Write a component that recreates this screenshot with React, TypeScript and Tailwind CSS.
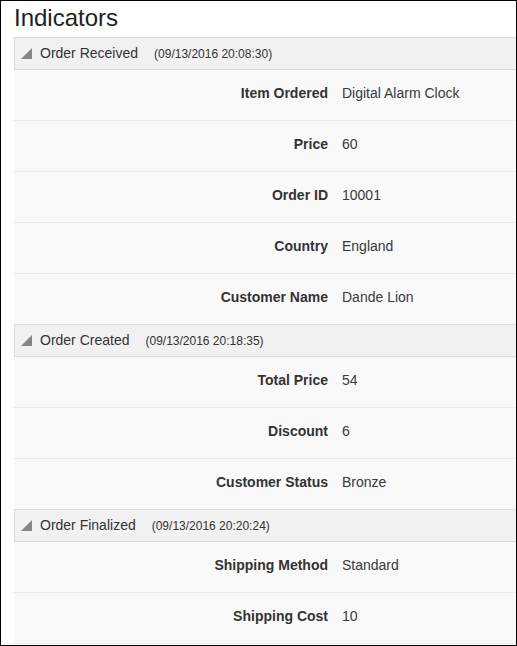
type Row = { label: string; value: string }
type Section = { title: string; time: string; rows: Row[] }

const sections: Section[] = [
  {
    title: 'Order Received',
    time: '(09/13/2016 20:08:30)',
    rows: [
      { label: 'Item Ordered', value: 'Digital Alarm Clock' },
      { label: 'Price', value: '60' },
      { label: 'Order ID', value: '10001' },
      { label: 'Country', value: 'England' },
      { label: 'Customer Name', value: 'Dande Lion' },
    ],
  },
  {
    title: 'Order Created',
    time: '(09/13/2016 20:18:35)',
    rows: [
      { label: 'Total Price', value: '54' },
      { label: 'Discount', value: '6' },
      { label: 'Customer Status', value: 'Bronze' },
    ],
  },
  {
    title: 'Order Finalized',
    time: '(09/13/2016 20:20:24)',
    rows: [
      { label: 'Shipping Method', value: 'Standard' },
      { label: 'Shipping Cost', value: '10' },
    ],
  },
]

function Triangle() {
  return (
    <svg width="11" height="11" viewBox="0 0 11 11" className="shrink-0">
      <polygon points="11,0 11,11 0,11" fill="#858585" />
    </svg>
  )
}

export default function App() {
  return (
    <div
      className="h-[646px] w-[517px] overflow-hidden border border-black bg-white pl-[13px] pt-[3px] text-[#333]"
      style={{ fontFamily: '"Liberation Sans", Arial, sans-serif' }}
    >
      <h1 className="mb-[5px] h-[28px] text-[24px] leading-[28px] text-[#222]">Indicators</h1>
      {sections.map((s, si) => (
        <div key={s.title}>
          <div className="flex h-[33px] items-center border-y border-l border-[#d8dde2] bg-[#f1f1f1] pl-[6px]">
            <Triangle />
            <span className="ml-[8px] text-[14px]">{s.title}</span>
            <span className="ml-[16px] text-[12px]">{s.time}</span>
          </div>
          {s.rows.map((r, ri) => {
            const last = ri === s.rows.length - 1
            const bordered = !last || si === sections.length - 1
            return (
              <div
                key={r.label}
                className={`flex items-center bg-[#f9f9f9] pb-[3px] text-[14px] ${
                  bordered ? 'h-[51px] border-b border-[#e9e9e9]' : 'h-[50px]'
                }`}
              >
                <span className="w-[314px] text-right font-bold">{r.label}</span>
                <span className="ml-[14px] text-[#3a3a3a]">{r.value}</span>
              </div>
            )
          })}
        </div>
      ))}
    </div>
  )
}
